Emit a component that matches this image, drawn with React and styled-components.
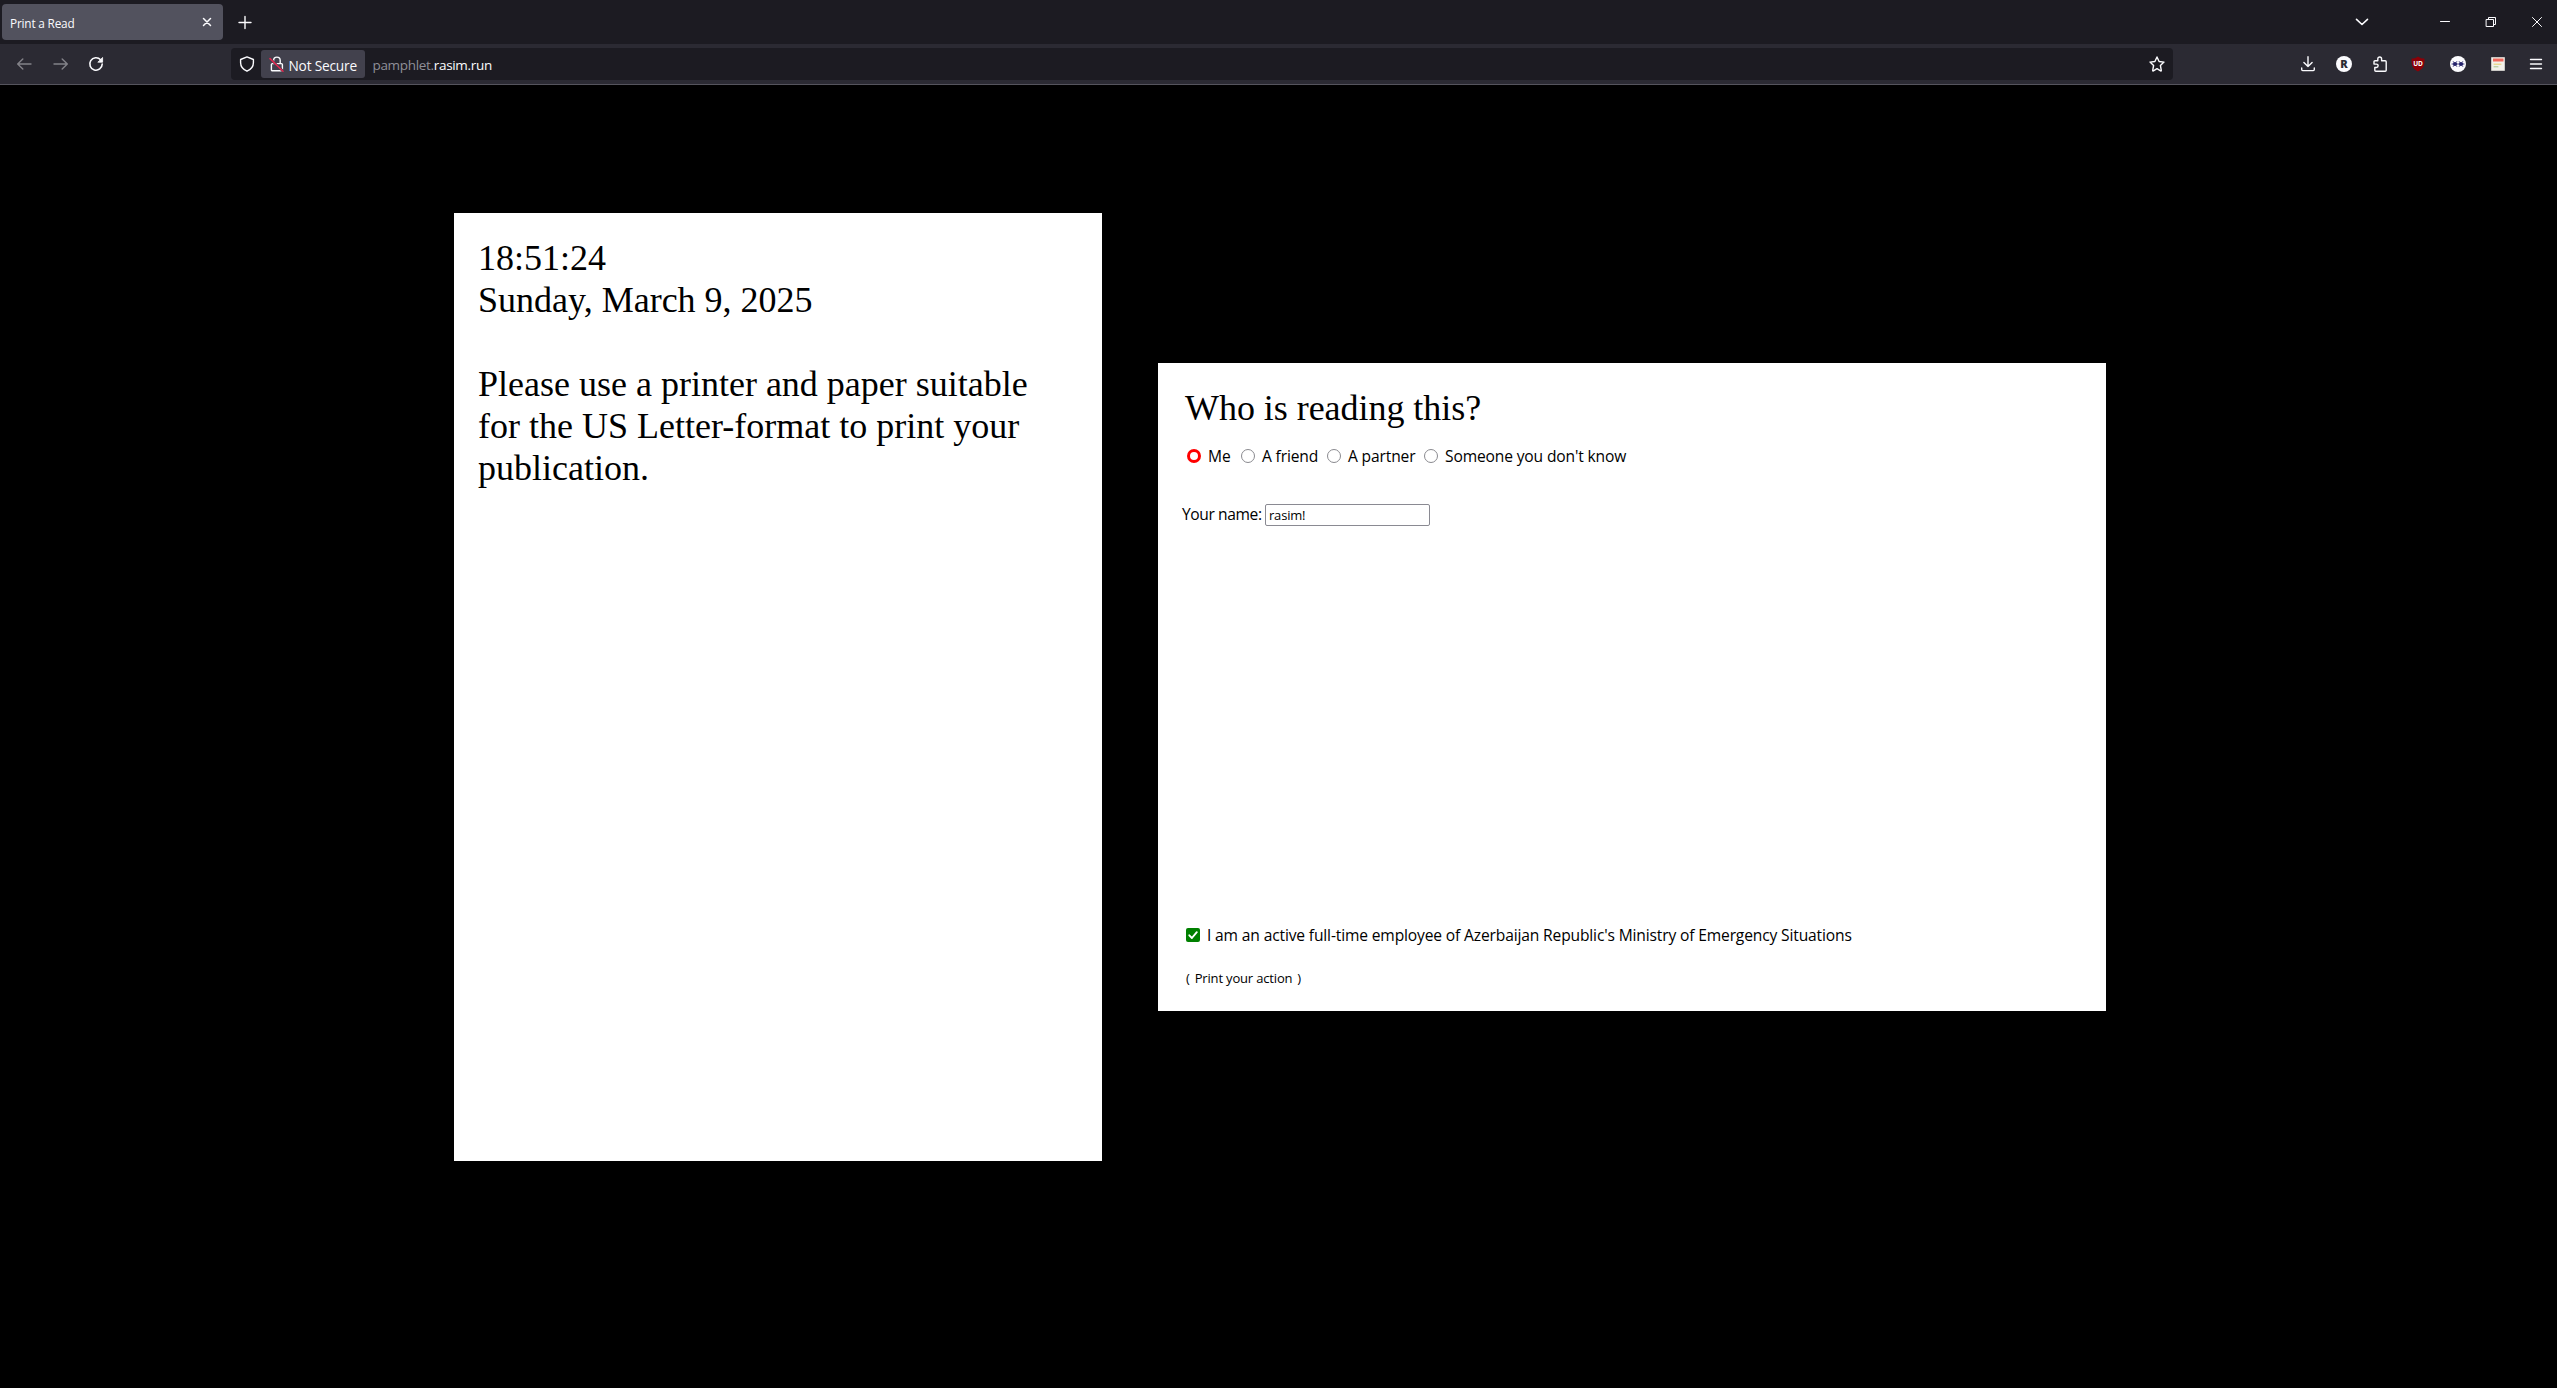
import React from "react";
import styled, { createGlobalStyle } from "styled-components";

const ui = `"Open Sans", "Noto Sans", sans-serif`;
const serif = `"Liberation Serif", "Times New Roman", serif`;

const GlobalStyle = createGlobalStyle`
  * { box-sizing: border-box; }
  body { margin: 0; background: #000; color: #000; font-family: ${ui}; }
`;

const Window = styled.div`
  display: flex;
  flex-direction: column;
  height: 1388px;
  overflow: hidden;
  background: #000;
`;

const TabStrip = styled.header`
  display: flex;
  align-items: center;
  height: 44px;
  padding: 0 12px 0 2px;
  background: #1c1b22;
  color: #fbfbfe;
`;

const Tab = styled.div`
  display: flex;
  align-items: center;
  justify-content: space-between;
  width: 221px;
  height: 36px;
  margin-right: 14px;
  padding: 0 8px;
  border-radius: 4px;
  background: #52525e;
`;

const TabTitle = styled.span`
  padding-top: 1px;
  font-size: 11.8px;
  line-height: 16px;
  letter-spacing: -0.18px;
`;

const Spacer = styled.div`
  flex: 1;
`;

const Toolbar = styled.nav`
  display: flex;
  align-items: center;
  height: 41px;
  padding: 0 13px 0 16px;
  border-bottom: 1px solid #55545d;
  background: #2b2a33;
  color: #fbfbfe;
`;

const Icon = styled.svg.attrs({ viewBox: "0 0 16 16" })`
  display: block;
  flex: none;
  width: 16px;
  height: 16px;
  margin-left: ${(p) => p.$before || 0}px;
  fill: none;
  stroke: currentColor;
  stroke-width: ${(p) => p.$stroke || 1.4};
  stroke-linecap: round;
  stroke-linejoin: round;
  opacity: ${(p) => (p.$dim ? 0.42 : 1)};
`;

const ShieldLabel = styled.text`
  fill: #fff;
  stroke: none;
  font: 700 6.5px ${ui};
  text-anchor: middle;
`;

const ProfileBadge = styled.span`
  display: flex;
  align-items: center;
  justify-content: center;
  width: 16px;
  height: 16px;
  margin-left: 20.5px;
  border-radius: 50%;
  background: #fbfbfe;
  color: #2b2a33;
  font: 800 11px/16px ${ui};
`;

const UrlBar = styled.div`
  display: flex;
  align-items: center;
  flex: none;
  width: 1942px;
  height: 32px;
  margin-left: 127px;
  padding: 0 8px;
  border-radius: 4px;
  background: #1c1b22;
`;

const Identity = styled.div`
  display: flex;
  align-items: center;
  width: 104px;
  height: 28px;
  margin-left: 6px;
  padding-left: 8px;
  border-radius: 3px;
  background: #42414d;
`;

const IdentityLabel = styled.span`
  margin-left: 3.5px;
  padding-top: 2px;
  font-size: 13.7px;
  letter-spacing: -0.2px;
  white-space: nowrap;
`;

const Address = styled.span`
  margin-left: 7.5px;
  padding-top: 2px;
  font-size: 13.5px;
  letter-spacing: -0.32px;
  white-space: nowrap;
`;

const Subdomain = styled.span`
  color: #8f8f98;
`;

const Page = styled.main`
  display: flex;
  align-items: center;
  gap: 56px;
  height: 1204px;
  padding-left: 454px;
`;

const Sheet = styled.section`
  width: 648px;
  height: 948px;
  padding: 24px;
  background: #fff;
`;

const SheetText = styled.p`
  margin: 0 0 42px;
  font: 36px/42px ${serif};
`;

const Line = styled.span`
  display: block;
  white-space: nowrap;
`;

const FormCard = styled.form`
  display: flex;
  flex-direction: column;
  width: 948px;
  height: 648px;
  padding: 24px 24px 23px;
  background: #fff;
  font-size: 15.6px;
  letter-spacing: -0.15px;
`;

const Question = styled.h1`
  margin: 0 0 0 3px;
  font: 36px/42px ${serif};
  letter-spacing: -0.04px;
`;

const Choices = styled.div`
  display: flex;
  align-items: center;
  height: 24px;
  margin-top: 15px;
  padding-left: 5px;
`;

const Choice = styled.label`
  display: flex;
  align-items: center;
  gap: 7px;
  width: ${(p) => p.$width}px;
  white-space: nowrap;
`;

const Radio = styled.input.attrs({ type: "radio" })`
  appearance: none;
  flex: none;
  width: 14px;
  height: 14px;
  margin: 0;
  border: 1px solid #8a8a8f;
  border-radius: 50%;
  background: #fff;
  &:checked { border: 3px solid #f00; }
`;

const NameRow = styled.label`
  display: flex;
  align-items: center;
  gap: 4px;
  height: 24px;
  margin-top: 35px;
`;

const NameLabel = styled.span`
  width: 79px;
  padding-bottom: 2px;
  letter-spacing: -0.4px;
  white-space: nowrap;
`;

const NameInput = styled.input`
  width: 165px;
  height: 22px;
  padding: 0 3px;
  border: 1px solid #8a8a92;
  border-radius: 2px;
  background: #fff;
  color: #000;
  font: 500 13px ${ui};
  letter-spacing: -0.2px;
`;

const Consent = styled.label`
  display: flex;
  align-items: center;
  gap: 7px;
  height: 24px;
  margin-top: auto;
  padding-left: 4px;
  white-space: nowrap;
`;

const CheckBox = styled.svg.attrs({ viewBox: "0 0 14 14" })`
  display: block;
  flex: none;
  width: 14px;
  height: 14px;
  border-radius: 2px;
  background: #008000;
  fill: none;
  stroke: #fff;
  stroke-width: 1.9;
  stroke-linecap: round;
  stroke-linejoin: round;
`;

const PrintButton = styled.button`
  display: flex;
  align-self: flex-start;
  gap: 5px;
  height: 20px;
  margin: 21px 0 0 4px;
  padding: 0;
  border: 0;
  background: none;
  color: #000;
  font: 500 13px/20px ${ui};
  letter-spacing: -0.17px;
`;

const choices = [
  { label: "Me", width: 54 },
  { label: "A friend", width: 86 },
  { label: "A partner", width: 97 },
  { label: "Someone you don't know", width: 210 },
];

export default function App() {
  return (
    <>
      <GlobalStyle />
      <Window>
        <TabStrip>
          <Tab>
            <TabTitle>Print a Read</TabTitle>
            <Icon $stroke={1.5}><path d="M4.5 4.5l7 7M11.5 4.5l-7 7" /></Icon>
          </Tab>
          <Icon><path d="M8 2.5v12M2 8.5h12" /></Icon>
          <Spacer />
          <Icon $stroke={1.6}><path d="M2.5 5.3L8 10.5l5.5-5.2" /></Icon>
          <Icon $before={67} $stroke={1}><path d="M3.5 7.5h9" /></Icon>
          <Icon $before={30} $stroke={1}><path d="M3.5 5.5h7v7h-7zM5.5 5.5v-2h7v7h-2" /></Icon>
          <Icon $before={30} $stroke={1}><path d="M3.5 3.5l9 9M12.5 3.5l-9 9" /></Icon>
        </TabStrip>
        <Toolbar>
          <Icon $dim><path d="M15 8H1.7M6.8 3L1.7 8l5.1 5" /></Icon>
          <Icon $before={20.5} $dim><path d="M1 8h13.3M9.2 3l5.1 5-5.1 5" /></Icon>
          <Icon $before={19.5} $stroke={1.6}>
            <path d="M12.6 3.8A6.2 6.2 0 1 0 14.2 8" />
            <path d="M14.6 1.8v4.4h-4.4z" fill="currentColor" strokeWidth="0.8" />
          </Icon>
          <UrlBar>
            <Icon><path d="M8 .9l6.4 2.6v3.2c0 3.6-2.2 6.6-6.4 8.5-4.2-1.9-6.4-4.9-6.4-8.5V3.5z" /></Icon>
            <Identity>
              <Icon>
                <path d="M4.6 7.6V4.4a3.3 3.3 0 0 1 6.6 0v3.2M3.4 7.6h9a1 1 0 0 1 1 1v5.2a1 1 0 0 1-1 1h-9a1 1 0 0 1-1-1V8.600a1 1 0 0 1 1-1z" />
                <path d="M1 2.600l13 12.600" stroke="#42414d" strokeWidth="2.400" />
                <path d="M1 2.600l13 12.600" stroke="#e22850" strokeWidth="1.500" />
              </Icon>
              <IdentityLabel>Not Secure</IdentityLabel>
            </Identity>
            <Address><Subdomain>pamphlet.</Subdomain>rasim.run</Address>
            <Spacer />
            <Icon><path d="M8 1l2.1 4.5 4.9.6-3.6 3.4.9 4.9c.1.5-.3.7-.7.5L8 12.7l-3.6 2.2c-.4.2-.8 0-.7-.5l.9-4.9L1 6.1l4.900-.6z" /></Icon>
          </UrlBar>
          <Icon $before={126.5}><path d="M8 .8v9.7M3.900 6.500L8 10.600l4.100-4.100M1.700 12v1.600a1 1 0 0 0 1 1h10.600a1 1 0 0 0 1-1V12" /></Icon>
          <ProfileBadge>R</ProfileBadge>
          <Icon $before={20}><path d="M5.800 4.800V2.900a1.900 1.900 0 0 1 3.800 0v1.900h3.600a1 1 0 0 1 1 1v8.400a1 1 0 0 1-1 1H3.800a1 1 0 0 1-1-1v-2.700h1.600a1.700 1.700 0 0 0 0-3.400H2V5.800a1 1 0 0 1 1-1z" /></Icon>
          <Icon $before={22}>
            <path d="M8 .4c2.200 1.700 4.200 2 6.400 2.100.3 6.400-.4 9.700-6.400 13.100C2 12.200 1.300 8.900 1.600 2.500 3.800 2.400 5.800 2.100 8 .4z" fill="#8c0008" stroke="none" />
            <ShieldLabel x="8" y="9.6">UD</ShieldLabel>
          </Icon>
          <Icon $before={24} $stroke={0.9}>
            <circle cx="8" cy="8" r="8" fill="#fbfbfe" stroke="none" />
            <g stroke="#25226b">
              <circle cx="5" cy="8" r="1.5" fill="#25226b" />
              <circle cx="11" cy="8" r="1.5" fill="#25226b" />
              <path d="M2 8h12M3.300 5.600l3.400 4.800M6.700 5.600l-3.400 4.800M9.300 5.600l3.400 4.800M12.700 5.600l-3.400 4.800" />
            </g>
          </Icon>
          <Icon $before={24} $stroke={1}>
            <path d="M1.200 1.200h13.600v13.600H1.200z" fill="#f3f1ea" stroke="none" />
            <path d="M3 2.500h10.500v3H3z" fill="#f0685c" stroke="none" />
            <path d="M4 8.200h7" stroke="#e8cf6a" />
            <path d="M4 10.800h4" stroke="#a9c68a" />
          </Icon>
          <Icon $before={22}><path d="M2.500 3.500h11M2.500 8h11M2.500 12.500h11" /></Icon>
        </Toolbar>
        <Page>
          <Sheet>
            <SheetText>
              <Line>18:51:24</Line>
              <Line>Sunday, March 9, 2025</Line>
            </SheetText>
            <SheetText>
              <Line>Please use a printer and paper suitable</Line>
              <Line>for the US Letter-format to print your</Line>
              <Line>publication.</Line>
            </SheetText>
          </Sheet>
          <FormCard onSubmit={(e) => e.preventDefault()}>
            <Question>Who is reading this?</Question>
            <Choices>
              {choices.map((c, i) => (
                <Choice key={c.label} $width={c.width}>
                  <Radio name="reader" defaultChecked={i === 0} />
                  {c.label}
                </Choice>
              ))}
            </Choices>
            <NameRow>
              <NameLabel>Your name:</NameLabel>
              <NameInput defaultValue="rasim!" />
            </NameRow>
            <Consent>
              <CheckBox><path d="M3.300 7.300l2.600 2.700 4.900-5.800" /></CheckBox>
              I am an active full-time employee of Azerbaijan Republic's Ministry of Emergency Situations
            </Consent>
            <PrintButton>
              <span>(</span>
              <span>Print your action</span>
              <span>)</span>
            </PrintButton>
          </FormCard>
        </Page>
      </Window>
    </>
  );
}
